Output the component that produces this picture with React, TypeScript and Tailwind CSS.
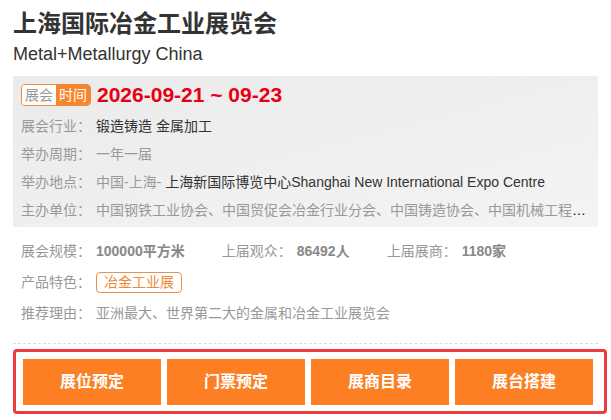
const font = { fontFamily: '"Liberation Sans", "Noto Sans CJK SC", sans-serif' };

const infoRows = [
  { label: "展会行业：", value: <span className="text-[#333]">锻造铸造 金属加工</span> },
  { label: "举办周期：", value: <span className="text-[#999]">一年一届</span> },
  {
    label: "举办地点：",
    value: (
      <>
        <span className="text-[#999]">中国-上海- </span>
        <span className="text-[#333]">上海新国际博览中心Shanghai New International Expo Centre</span>
      </>
    ),
  },
  {
    label: "主办单位：",
    value: (
      <span className="text-[#999]">
        中国钢铁工业协会、中国贸促会冶金行业分会、中国铸造协会、中国机械工程学会塑性工程分会
      </span>
    ),
  },
];

const stats = [
  { label: "展会规模：", value: "100000平方米" },
  { label: "上届观众：", value: "86492人" },
  { label: "上届展商：", value: "1180家" },
];

const actions = ["展位预定", "门票预定", "展商目录", "展台搭建"];

export default function App() {
  return (
    <div className="h-[420px] w-[611px] bg-white px-[13px] pt-[8px]" style={font}>
      <h1 className="text-[24px] font-bold leading-[32px] text-[#333]">上海国际冶金工业展览会</h1>
      <p className="text-[18px] leading-[28px] text-[#333]">Metal+Metallurgy China</p>

      <div className="mt-[8px] w-[585px] bg-gradient-to-br from-[#ebebeb] via-[#efefef] to-[#f4f4f4] pb-[3px] pl-[8px] pr-[12px] pt-[8px]">
        <div className="flex h-[22px] items-center">
          <div className="flex h-[22px] overflow-hidden rounded-[4px] border border-[#f28a3c] text-[14px] leading-[20px]">
            <span className="bg-white px-[3px] text-[#999]">展会</span>
            <span className="bg-[#f7852b] px-[3px] text-white">时间</span>
          </div>
          <span className="ml-[6px] text-[21px] font-bold leading-[22px] text-[#e60012]">2026-09-21 ~ 09-23</span>
        </div>
        <div className="mt-[6px]">
          {infoRows.map((r) => (
            <div key={r.label} className="flex h-[28px] items-center text-[14px]">
              <span className="w-[75px] shrink-0 text-[#999]">{r.label}</span>
              <span className="min-w-0 truncate">{r.value}</span>
            </div>
          ))}
        </div>
      </div>

      <div className="pl-[8px] pt-[9px] text-[14px]">
        <div className="flex h-[31px] items-center">
          {stats.map((s) => (
            <div key={s.label} className="mr-[37px] flex items-center">
              <span className="w-[75px] text-[#999]">{s.label}</span>
              <span className="font-bold text-[#888]">{s.value}</span>
            </div>
          ))}
        </div>
        <div className="flex h-[31px] items-center">
          <span className="w-[75px] text-[#999]">产品特色：</span>
          <span className="rounded-[4px] border border-[#e8914c] px-[7px] leading-[19px] text-[#ec8a3d]">冶金工业展</span>
        </div>
        <div className="flex h-[31px] items-center">
          <span className="w-[75px] text-[#999]">推荐理由：</span>
          <span className="text-[#999]">亚洲最大、世界第二大的金属和冶金工业展览会</span>
        </div>
      </div>

      <div className="mt-[14px] w-[585px] border-t border-dashed border-[#dcdcdc]" />

      <div className="mt-[5px] flex w-[594px] gap-[6px] rounded-[4px] border-[3px] border-[#ec3b3f] pb-[6px] pl-[7px] pt-[7px]">
        {actions.map((a) => (
          <button
            key={a}
            type="button"
            className="h-[46px] w-[138px] bg-[#fd7f24] text-[16px] font-bold text-white"
          >
            {a}
          </button>
        ))}
      </div>
    </div>
  );
}
